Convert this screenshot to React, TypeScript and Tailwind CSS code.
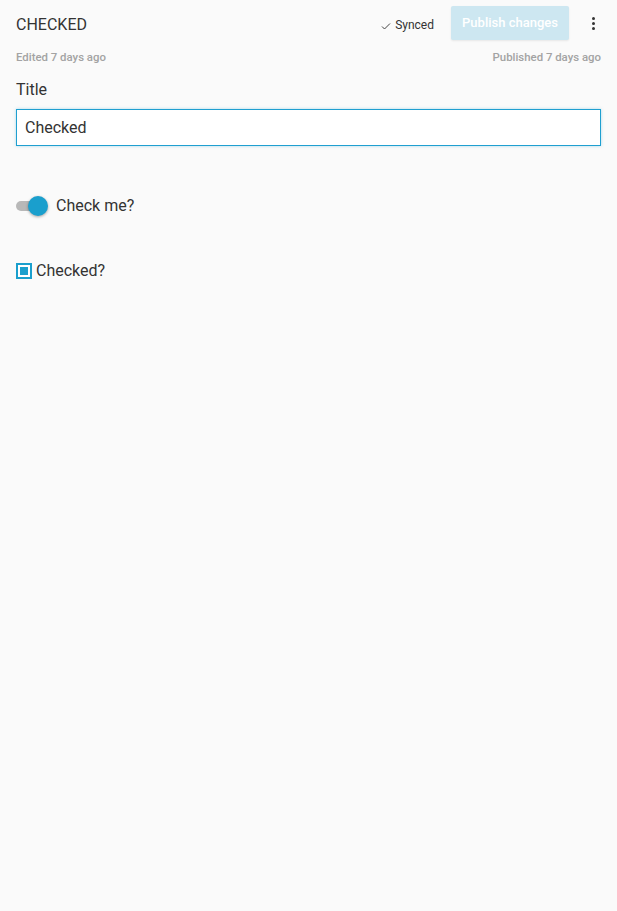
import React from 'react';

const App: React.FC = () => {
  return (
    <div className="min-h-[911px] bg-[#fafafa] px-4 font-['Roboto',sans-serif] text-[#333]">
      <header className="flex items-start justify-between pt-[6px]">
        <h1 className="text-[16px] leading-[38px] font-normal text-[#333]">CHECKED</h1>
        <div className="flex items-center">
          <span className="mt-[3px] flex items-center gap-[4px] text-[12px] text-[#333]">
            <svg width="10" height="8" viewBox="0 0 10 8" className="mt-[2px]">
              <path d="M1 4.5 L3.5 7 L9 1.5" fill="none" stroke="#444" strokeWidth="1" />
            </svg>
            Synced
          </span>
          <button
            disabled
            className="ml-[17px] h-[34px] w-[118px] rounded-[2px] bg-[#cde7f1] text-[13px] font-medium text-white shadow-[0_1px_2px_rgba(0,0,0,0.08)]"
          >
            Publish changes
          </button>
          <button className="ml-[14px] mr-[-2px] flex h-[24px] w-[20px] flex-col items-center justify-center gap-[2px]">
            <span className="h-[3px] w-[3px] rounded-full bg-[#333]" />
            <span className="h-[3px] w-[3px] rounded-full bg-[#333]" />
            <span className="h-[3px] w-[3px] rounded-full bg-[#333]" />
          </button>
        </div>
      </header>

      <div className="mt-[5px] flex justify-between text-[11.4px] leading-[17px] font-medium text-[#a3a3a3]">
        <span>Edited 7 days ago</span>
        <span>Published 7 days ago</span>
      </div>

      <label className="mt-[14px] block text-[16px] leading-[20px] text-[#333]">Title</label>
      <input
        defaultValue="Checked"
        className="mt-[9px] block h-[37px] w-full border border-[#1f9fd0] bg-white px-[8px] text-[16px] text-[#333] shadow-[0_0_3px_rgba(31,159,208,0.35)] outline-none"
      />

      <div className="mt-[48px] flex items-center">
        <div className="relative h-[20px] w-[32px]">
          <div className="absolute left-0 top-[5px] h-[10px] w-[26px] rounded-full bg-[#b8b8b8]" />
          <div className="absolute left-[12px] top-0 h-[20px] w-[20px] rounded-full bg-[#1a9fcd] shadow-[0_1px_3px_rgba(0,0,0,0.35)]" />
        </div>
        <span className="ml-[8px] text-[16px]">Check me?</span>
      </div>

      <div className="mt-[41px] flex items-center">
        <div className="flex h-[16px] w-[16px] items-center justify-center border-2 border-[#1a9fcd] bg-white">
          <div className="h-[8px] w-[8px] bg-[#1a9fcd]" />
        </div>
        <span className="ml-[4px] text-[16px]">Checked?</span>
      </div>
    </div>
  );
};

export default App;
